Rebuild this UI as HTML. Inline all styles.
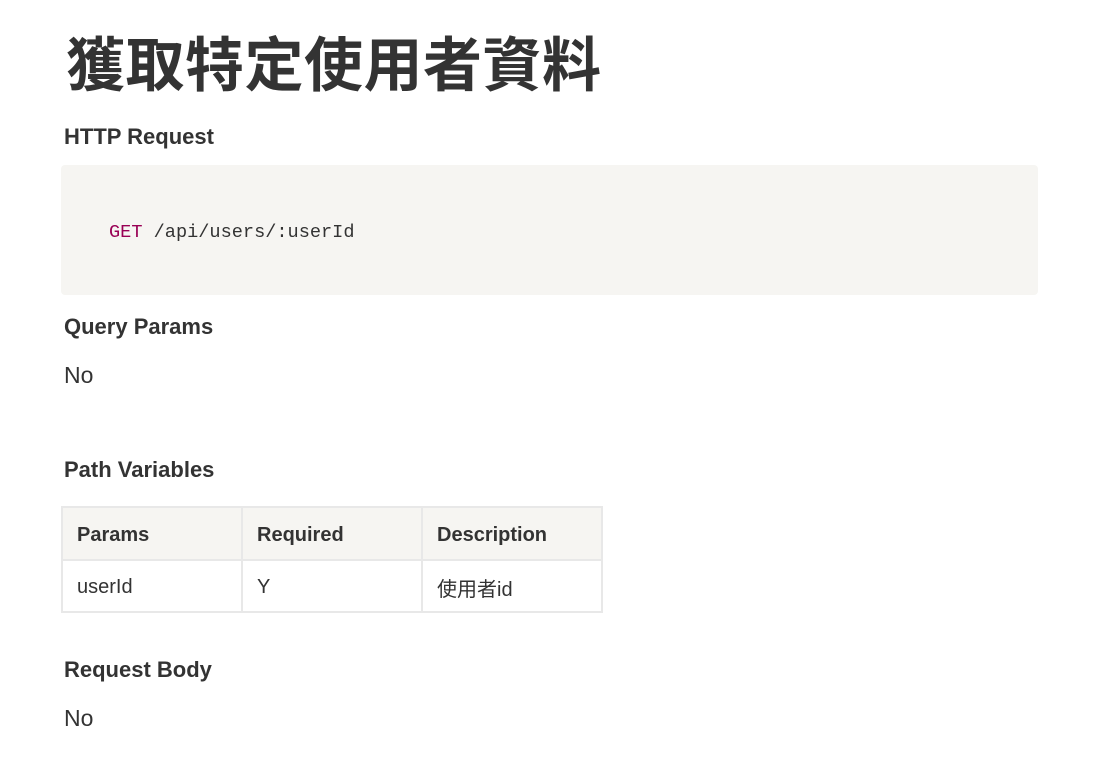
<!DOCTYPE html>
<html><head><meta charset="utf-8"><style>
body{margin:0;background:#fff;color:#333;font-family:"Liberation Sans","Noto Sans CJK TC",sans-serif;}
.t{position:absolute;white-space:nowrap}
h1{position:absolute;left:66px;top:18px;margin:0;font-size:59px;font-weight:bold;letter-spacing:0.5px;font-family:"Noto Sans CJK TC",sans-serif;line-height:86px;color:#333}
.h{font-size:22px;font-weight:bold;color:#333;left:64px}
.p{font-size:23px;color:#333;left:64px}
.code{position:absolute;left:61px;top:165px;width:977px;height:130px;background:#f6f5f2;border-radius:4px}
.code span.c{position:absolute;left:48px;top:57px;font-family:"Liberation Mono","DejaVu Sans Mono",monospace;font-size:18.6px;color:#333}
table{position:absolute;left:61px;top:506px;border-collapse:collapse;font-size:20px;table-layout:fixed;width:542px}
td{border:2px solid #e8e8e8;width:180px;box-sizing:border-box;padding:3px 0 0 14px;height:52px;vertical-align:middle}
tr.hd td{background:#f6f5f2;font-weight:bold;height:53px}
</style></head><body>
<h1>獲取特定使用者資料</h1>
<div class="t h" style="top:124px">HTTP Request</div>
<div class="code"><span class="c"><span style="color:#990055">GET</span> /api/users/:userId</span></div>
<div class="t h" style="top:314px">Query Params</div>
<div class="t p" style="top:362px">No</div>
<div class="t h" style="top:457px">Path Variables</div>
<table>
<tr class="hd"><td>Params</td><td>Required</td><td>Description</td></tr>
<tr><td>userId</td><td>Y</td><td>使用者id</td></tr>
</table>
<div class="t h" style="top:657px">Request Body</div>
<div class="t p" style="top:705px">No</div>
</body></html>
